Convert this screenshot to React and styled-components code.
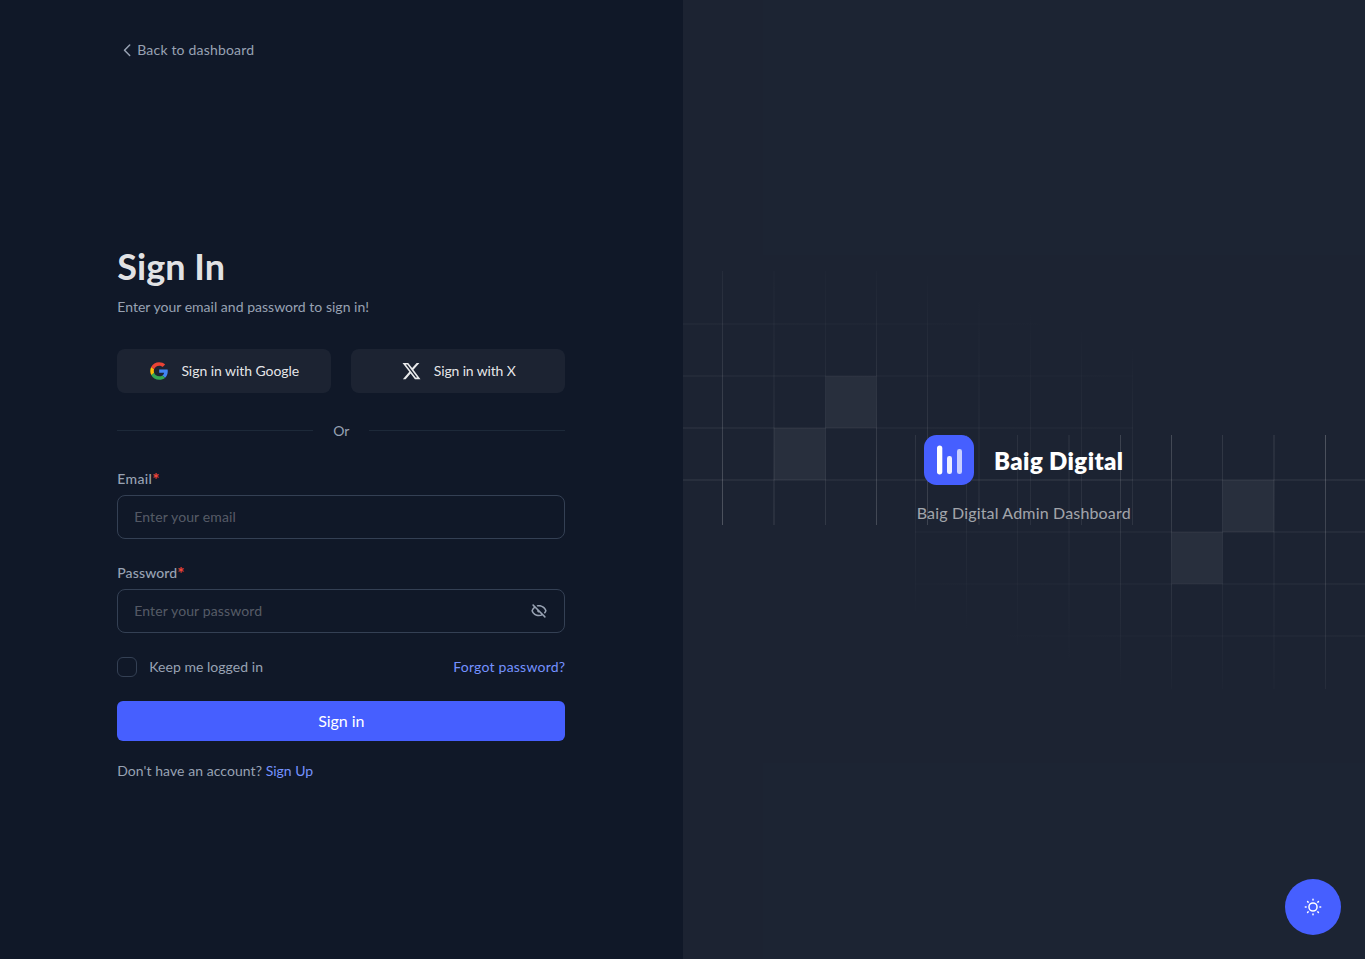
import React from "react";
import styled, { createGlobalStyle } from "styled-components";

const GlobalStyle = createGlobalStyle`
  *, *::before, *::after { box-sizing: border-box; }
  body { margin: 0; background: #101828; }
  body, input, button { font-family: Lato, "Open Sans", sans-serif; }
`;

const Page = styled.div`
  display: grid;
  grid-template-columns: 1fr 1fr;
  height: 100vh;
  overflow: hidden;
  background: #101828;
  color: #98a2b3;
  font-size: 14px;
  line-height: 20px;
`;

const FormPanel = styled.section`
  display: flex;
  flex-direction: column;
  align-items: center;
  padding-top: 40px;
`;

const Column = styled.div`
  width: 448px;
`;

const BackLink = styled.a`
  display: inline-flex;
  align-items: center;
  color: #98a2b3;
  letter-spacing: 0.185px;
  text-decoration: none;
  vertical-align: top;
`;

const Center = styled.main`
  display: flex;
  flex: 1;
  flex-direction: column;
  justify-content: center;
  width: 448px;
  padding-top: 7px;
`;

const Title = styled.h1`
  margin: 0 0 8px;
  padding-bottom: 2px;
  color: rgba(255, 255, 255, 0.9);
  font-size: 36px;
  font-weight: 700;
  line-height: 42px;
  letter-spacing: 0.04px;
`;

const Subtitle = styled.p`
  margin: 0 0 32px;
  letter-spacing: 0.02px;
`;

const SocialRow = styled.div`
  display: grid;
  grid-template-columns: 1fr 1fr;
  gap: 20px;
`;

const SocialButton = styled.button`
  display: flex;
  align-items: center;
  justify-content: center;
  gap: 12px;
  height: 44px;
  padding: 0;
  border: 0;
  border-radius: 8px;
  background: rgba(255, 255, 255, 0.05);
  color: rgba(255, 255, 255, 0.9);
  font-size: 14px;
  line-height: 20px;
  letter-spacing: ${(p) => p.$tracking};
`;

const Divider = styled.div`
  display: flex;
  align-items: center;
  gap: 20px;
  margin: 28px 0;

  &::before,
  &::after {
    content: "";
    flex: 1;
    height: 1px;
    margin-top: -1px;
    background: #1d2939;
  }
`;

const Form = styled.form`
  display: flex;
  flex-direction: column;
  gap: 24px;
`;

const Field = styled.div`
  display: flex;
  flex-direction: column;
  gap: 6px;
`;

const Label = styled.label`
  font-weight: 500;
  letter-spacing: ${(p) => p.$tracking};
`;

const Required = styled.span`
  color: #f04438;
  font-size: 17px;
  font-weight: 700;
  line-height: 1px;
  letter-spacing: 0;
  vertical-align: -2px;
`;

const InputBox = styled.div`
  display: flex;
  align-items: center;
  height: 44px;
  padding: 0 15px 0 16px;
  border: 1px solid #344054;
  border-radius: 8px;
`;

const Input = styled.input`
  flex: 1;
  min-width: 0;
  padding: 0;
  border: 0;
  outline: 0;
  background: transparent;
  color: #fff;
  font-size: 14px;
  line-height: 20px;
  letter-spacing: 0.12px;

  &::placeholder { color: rgba(255, 255, 255, 0.3); opacity: 1; }
`;

const Options = styled.div`
  display: flex;
  align-items: center;
  justify-content: space-between;
`;

const Remember = styled.label`
  display: flex;
  align-items: center;
  gap: 12px;
  letter-spacing: 0.04px;
`;

const Checkbox = styled.span`
  width: 20px;
  height: 20px;
  border: 1px solid #344054;
  border-radius: 6px;
`;

const TextLink = styled.a`
  color: #7592ff;
  letter-spacing: ${(p) => p.$tracking};
  text-decoration: none;
`;

const Submit = styled.button`
  height: 40px;
  padding: 0 0 2px;
  border: 0;
  border-radius: 6px;
  background: #465fff;
  color: #fff;
  font-size: 16px;
  letter-spacing: -0.08px;
`;

const SignUp = styled.p`
  margin: 20px 0 0;
  letter-spacing: 0.06px;
`;

const BrandPanel = styled.section`
  display: flex;
  align-items: center;
  background: rgba(255, 255, 255, 0.05);
`;

const Brand = styled.div`
  position: relative;
  display: flex;
  flex: 1;
  flex-direction: column;
  align-items: center;
  gap: 16px;
`;

const BrandRow = styled.div`
  position: relative;
  display: flex;
  align-items: center;
  gap: 20px;
`;

const BrandName = styled.span`
  padding-top: 2px;
  color: #fff;
  font-size: 24px;
  font-weight: 800;
  line-height: 32px;
  letter-spacing: 0.4px;
`;

const Tagline = styled.p`
  position: relative;
  margin: 0;
  color: rgba(255, 255, 255, 0.6);
  font-size: 16px;
  line-height: 24px;
  letter-spacing: 0.17px;
`;

const GridArt = styled.svg`
  position: absolute;
  ${(p) => (p.$flipped ? "left: 0; bottom: 0; transform: rotate(180deg);" : "right: 0; top: 0;")}
`;

const ThemeToggle = styled.button`
  position: fixed;
  right: 24px;
  bottom: 24px;
  display: flex;
  align-items: center;
  justify-content: center;
  width: 56px;
  height: 56px;
  padding: 0;
  border: 0;
  border-radius: 50%;
  background: #465fff;
  color: #fff;
`;

// [left edge, width, strength] of each vertical line
const columns = [
  [0, 1, 0.75], [51, 1, 0.65], [102, 1, 0.5], [153, 2, 0.3], [205, 1, 0.9],
  [256, 1, 1], [307, 1, 0.5], [358, 2, 0.3], [410, 1, 1],
];
const rows = [44, 96, 148, 200];

function GridShape({ id, flipped }) {
  return (
    <GridArt $flipped={flipped} width="450" height="254" viewBox="0 0 450 254" fill="none" aria-hidden="true">
      <defs>
        <linearGradient id={id} gradientUnits="userSpaceOnUse" x1="450" y1="0" x2="345" y2="302">
          <stop stopColor="#fff" stopOpacity="0.23" />
          <stop offset="0.5" stopColor="#fff" stopOpacity="0.1" />
          <stop offset="1" stopColor="#fff" stopOpacity="0" />
        </linearGradient>
      </defs>
      <g fill={`url(#${id})`}>
        {columns.map(([x, w, o]) => <rect key={x} x={x} y="0" width={w} height="254" opacity={o} />)}
        {rows.map((y) => <rect key={y} x="0" y={y} width="450" height="2" opacity="0.28" />)}
      </g>
      <rect x="257" y="97" width="50.5" height="52" fill="#fff" fillOpacity="0.055" />
      <rect x="307.5" y="45" width="51.5" height="52" fill="#fff" fillOpacity="0.055" />
    </GridArt>
  );
}

function ChevronIcon() {
  return (
    <svg width="20" height="20" viewBox="0 0 20 20" fill="none">
      <path d="M12.7083 5L7.5 10.2083L12.7083 15.4167" stroke="currentColor" strokeWidth="1.5" strokeLinecap="round" strokeLinejoin="round" />
    </svg>
  );
}

function GoogleIcon() {
  return (
    <svg width="20" height="20" viewBox="0 0 20 20" fill="none">
      <path d="M18.7511 10.1944C18.7511 9.47495 18.6915 8.94995 18.5626 8.40552H10.1797V11.6527H15.1003C15.0011 12.4597 14.4654 13.675 13.2749 14.4916L13.2582 14.6003L15.9087 16.6126L16.0924 16.6305C17.7788 15.1041 18.7511 12.8583 18.7511 10.1944Z" fill="#4285F4" />
      <path d="M10.1788 18.75C12.5895 18.75 14.6133 17.9722 16.0915 16.6305L13.274 14.4916C12.5201 15.0068 11.5081 15.3666 10.1788 15.3666C7.81773 15.3666 5.81379 13.8402 5.09944 11.7305L4.99473 11.7392L2.23868 13.8295L2.20264 13.9277C3.67087 16.786 6.68674 18.75 10.1788 18.75Z" fill="#34A853" />
      <path d="M5.10014 11.7305C4.91165 11.186 4.80257 10.6027 4.80257 9.99992C4.80257 9.3971 4.91165 8.81379 5.09022 8.26935L5.08523 8.1534L2.29464 6.02954L2.20333 6.0721C1.5982 7.25823 1.25098 8.5902 1.25098 9.99992C1.25098 11.4096 1.5982 12.7415 2.20333 13.9277L5.10014 11.7305Z" fill="#FBBC05" />
      <path d="M10.1789 4.63331C11.8554 4.63331 12.9864 5.34303 13.6312 5.93612L16.1511 3.525C14.6035 2.11528 12.5895 1.25 10.1789 1.25C6.68676 1.25 3.67088 3.21387 2.20264 6.07218L5.08953 8.26943C5.81381 6.15972 7.81776 4.63331 10.1789 4.63331Z" fill="#EB4335" />
    </svg>
  );
}

function XIcon() {
  return (
    <svg width="21" height="20" viewBox="0 0 21 20" fill="currentColor">
      <path d="M15.6705 1.875H18.4272L12.4047 8.75833L19.4897 18.125H13.9422L9.59717 12.4442L4.62554 18.125H1.86721L8.30887 10.7625L1.51221 1.875H7.20054L11.128 7.0675L15.6705 1.875ZM14.703 16.475H16.2305L6.37054 3.43833H4.73137L14.703 16.475Z" />
    </svg>
  );
}

function EyeOffIcon() {
  return (
    <svg width="20" height="20" viewBox="0 0 20 20" fill="#98a2b3">
      <path fillRule="evenodd" clipRule="evenodd" d="M4.63803 3.57709C4.34513 3.2842 3.87026 3.2842 3.57737 3.57709C3.28447 3.86999 3.28447 4.34486 3.57737 4.63775L4.85323 5.91362C3.74609 6.84199 2.89363 8.06395 2.4155 9.45936C2.3615 9.61694 2.3615 9.78801 2.41549 9.94558C3.49488 13.0957 6.48191 15.3619 10.0002 15.3619C11.255 15.3619 12.4422 15.0737 13.4994 14.5598L15.3625 16.4229C15.6554 16.7158 16.1302 16.7158 16.4231 16.4229C16.716 16.13 16.716 15.6551 16.4231 15.3622L4.63803 3.57709ZM12.3608 13.4212L10.4475 11.5079C10.3061 11.5423 10.1584 11.5606 10.0064 11.5606H9.99151C8.96527 11.5606 8.13333 10.7286 8.13333 9.70237C8.13333 9.5461 8.15262 9.39434 8.18895 9.24933L5.91885 6.97923C5.03505 7.69015 4.34057 8.62704 3.92328 9.70247C4.86803 12.1373 7.23361 13.8619 10.0002 13.8619C10.8326 13.8619 11.6287 13.7058 12.3608 13.4212ZM16.0771 9.70249C15.7843 10.4569 15.3552 11.1432 14.8199 11.7311L15.8813 12.7925C16.6329 11.9813 17.2187 11.0143 17.5849 9.94561C17.6389 9.78803 17.6389 9.61696 17.5849 9.45938C16.5055 6.30925 13.5184 4.04303 10.0002 4.04303C9.13525 4.04303 8.30244 4.17999 7.52218 4.43338L8.75139 5.66259C9.1556 5.58413 9.57311 5.54303 10.0002 5.54303C12.7667 5.54303 15.1323 7.26768 16.0771 9.70249Z" />
    </svg>
  );
}

function LogoMark() {
  return (
    <svg width="50" height="50" viewBox="0 0 50 50" fill="none">
      <rect width="50" height="50" rx="12.5" fill="#465fff" />
      <rect x="13" y="10.5" width="5.3" height="29" rx="2.65" fill="#fff" />
      <rect x="23" y="21" width="5" height="18" rx="2.3" fill="#fff" fillOpacity="0.9" />
      <rect x="33" y="14" width="5" height="25" rx="2.3" fill="#fff" fillOpacity="0.7" />
    </svg>
  );
}

function SunIcon() {
  return (
    <svg width="20" height="20" viewBox="0 0 20 20" fill="none" stroke="currentColor" strokeWidth="1.5">
      <circle cx="10" cy="10" r="4.05" />
      <g strokeLinecap="round">
        {[0, 45, 90, 135, 180, 225, 270, 315].map((a) => (
          <path key={a} d="M10 2.3V3.1" transform={`rotate(${a} 10 10)`} />
        ))}
      </g>
    </svg>
  );
}

export default function App() {
  return (
    <Page>
      <GlobalStyle />
      <FormPanel>
        <Column>
          <BackLink href="#"><ChevronIcon />Back to dashboard</BackLink>
        </Column>
        <Center>
          <Title>Sign In</Title>
          <Subtitle>Enter your email and password to sign in!</Subtitle>
          <SocialRow>
            <SocialButton type="button" $tracking="-0.056px"><GoogleIcon />Sign in with Google</SocialButton>
            <SocialButton type="button" $tracking="-0.15px"><XIcon />Sign in with X</SocialButton>
          </SocialRow>
          <Divider>Or</Divider>
          <Form>
            <Field>
              <Label htmlFor="email" $tracking="0.36px">Email<Required>*</Required></Label>
              <InputBox><Input id="email" placeholder="Enter your email" /></InputBox>
            </Field>
            <Field>
              <Label htmlFor="password" $tracking="0.12px">Password<Required>*</Required></Label>
              <InputBox>
                <Input id="password" type="password" placeholder="Enter your password" />
                <EyeOffIcon />
              </InputBox>
            </Field>
            <Options>
              <Remember><Checkbox />Keep me logged in</Remember>
              <TextLink href="#" $tracking="0.22px">Forgot password?</TextLink>
            </Options>
            <Submit type="button">Sign in</Submit>
          </Form>
          <SignUp>Don't have an account? <TextLink href="#" $tracking="0px">Sign Up</TextLink></SignUp>
        </Center>
      </FormPanel>
      <BrandPanel>
        <Brand>
          <GridShape id="grid-right" />
          <GridShape id="grid-left" flipped />
          <BrandRow><LogoMark /><BrandName>Baig Digital</BrandName></BrandRow>
          <Tagline>Baig Digital Admin Dashboard</Tagline>
        </Brand>
      </BrandPanel>
      <ThemeToggle type="button" aria-label="Toggle theme"><SunIcon /></ThemeToggle>
    </Page>
  );
}
